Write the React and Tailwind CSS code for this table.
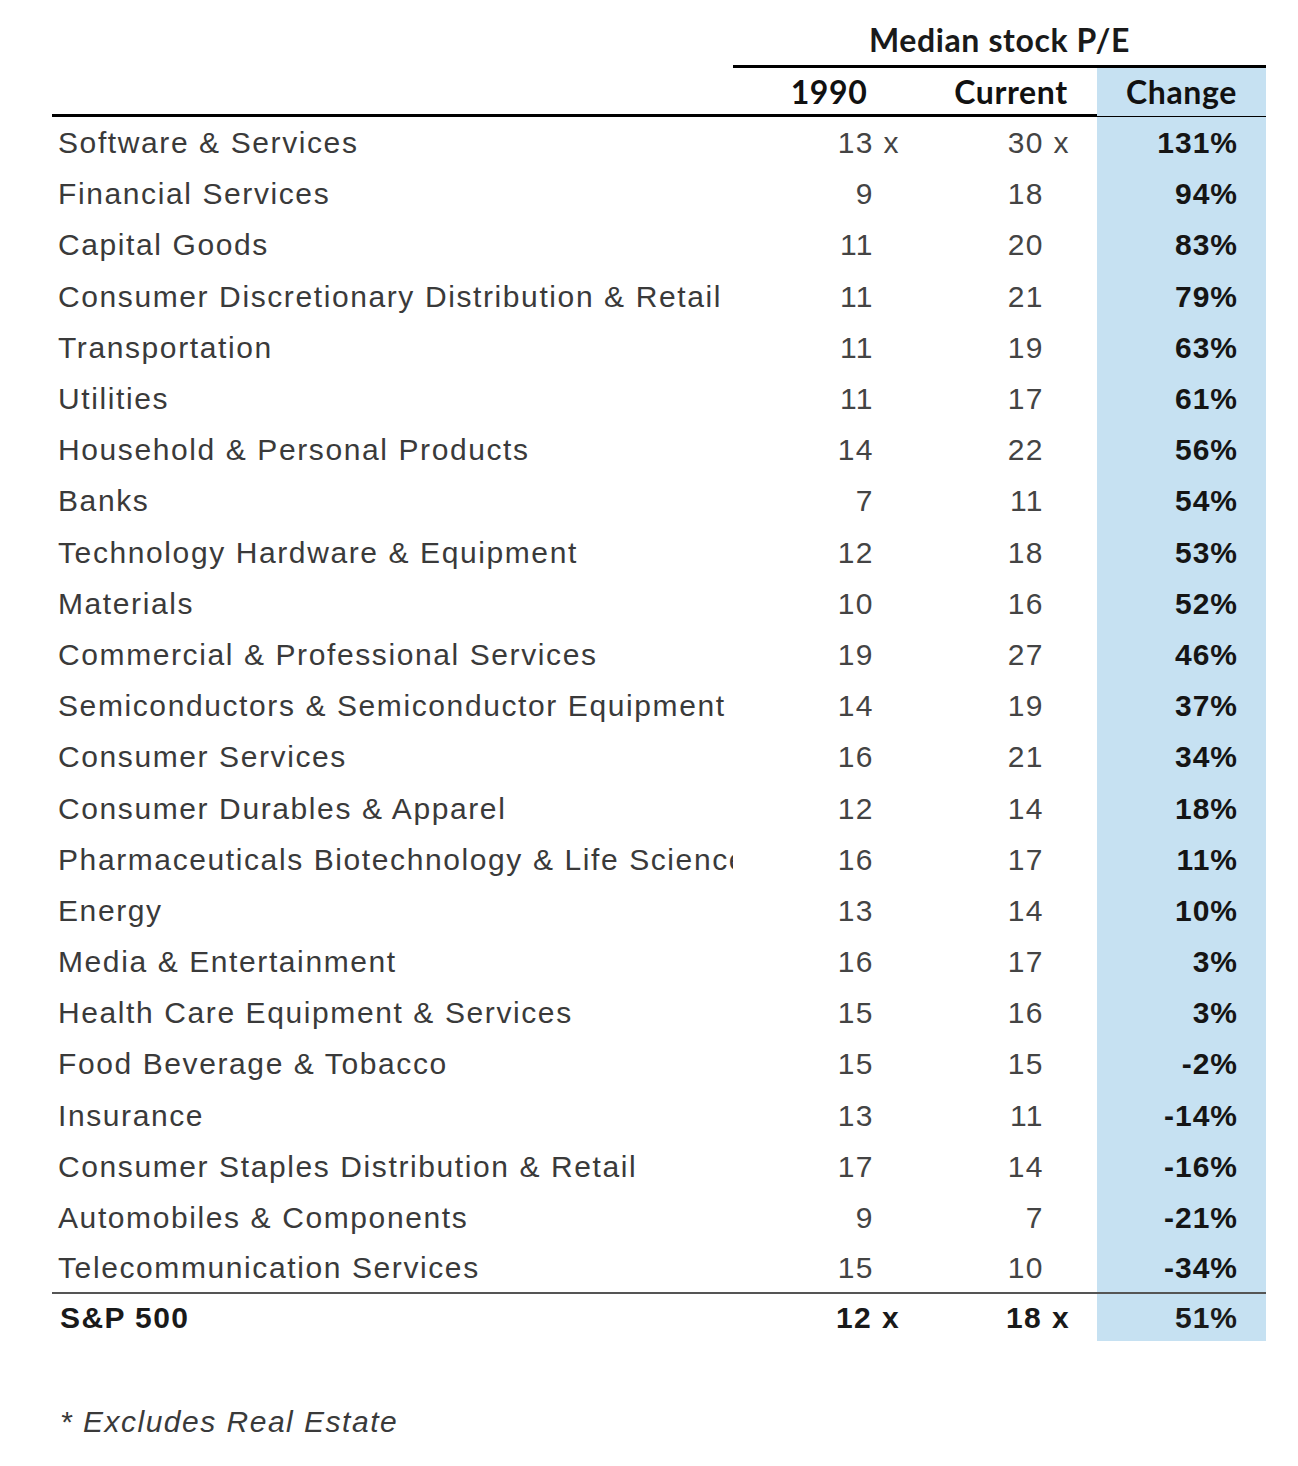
import React from "react";

const rows = [
  ["Software & Services", "13", "30", "131%", true],
  ["Financial Services", "9", "18", "94%"],
  ["Capital Goods", "11", "20", "83%"],
  ["Consumer Discretionary Distribution & Retail", "11", "21", "79%"],
  ["Transportation", "11", "19", "63%"],
  ["Utilities", "11", "17", "61%"],
  ["Household & Personal Products", "14", "22", "56%"],
  ["Banks", "7", "11", "54%"],
  ["Technology Hardware & Equipment", "12", "18", "53%"],
  ["Materials", "10", "16", "52%"],
  ["Commercial & Professional Services", "19", "27", "46%"],
  ["Semiconductors & Semiconductor Equipment", "14", "19", "37%"],
  ["Consumer Services", "16", "21", "34%"],
  ["Consumer Durables & Apparel", "12", "14", "18%"],
  ["Pharmaceuticals Biotechnology & Life Sciences", "16", "17", "11%"],
  ["Energy", "13", "14", "10%"],
  ["Media & Entertainment", "16", "17", "3%"],
  ["Health Care Equipment & Services", "15", "16", "3%"],
  ["Food Beverage & Tobacco", "15", "15", "-2%"],
  ["Insurance", "13", "11", "-14%"],
  ["Consumer Staples Distribution & Retail", "17", "14", "-16%"],
  ["Automobiles & Components", "9", "7", "-21%"],
  ["Telecommunication Services", "15", "10", "-34%"],
];

const grid = "grid grid-cols-[681px_192px_172px_169px]";

function Num({ value, showX }) {
  return (
    <span>
      {value}
      <span className={showX ? "" : "invisible"}> x</span>
    </span>
  );
}

export default function App() {
  return (
    <div className="w-[1298px] h-[1466px] bg-white pl-[52px] pt-[14px] font-['Liberation_Sans',Arial,sans-serif]">
      <div className="w-[1214px]">
        <div className={grid}>
          <div />
          <div className="col-span-3 h-[54px] border-b-[3px] border-black flex items-center justify-center font-['Lato',sans-serif] font-bold text-[32px] tracking-[0.6px] text-[#1a1a1a]">
            Median stock P/E
          </div>
        </div>
        <div className={`${grid} h-[49px] pb-[3px] border-b-[3px] border-black font-['Lato',sans-serif] font-bold text-[32px] tracking-[0.6px] text-[#111]`}>
          <div />
          <div className="flex items-center justify-center">1990</div>
          <div className="flex items-center justify-center">Current</div>
          <div className="flex items-center justify-center bg-[#c6e1f2]">Change</div>
        </div>
        {rows.map(([label, a, b, c, showX], i) => (
          <div
            key={label}
            className={`${grid} h-[51.2px] text-[30px] ${
              i === rows.length - 1 ? "border-b-2 border-[#555]" : ""
            }`}
          >
            <div className="flex items-center pl-[6px] overflow-hidden whitespace-nowrap tracking-[1.6px] text-[#3a3a3a]">
              {label}
            </div>
            <div className="flex items-center justify-end pr-[25px] tracking-[1.4px] text-[#444]">
              <Num value={a} showX={showX} />
            </div>
            <div className="flex items-center justify-end pr-[27px] tracking-[1.4px] text-[#444]">
              <Num value={b} showX={showX} />
            </div>
            <div className="flex items-center justify-end pr-[28px] bg-[#c6e1f2] font-bold tracking-[1px] text-[#151515]">
              {c}
            </div>
          </div>
        ))}
        <div className={`${grid} h-[50px] pb-[3px] text-[30px] font-bold text-[#1a1a1a]`}>
          <div className="flex items-center pl-[8px] tracking-[1.4px]">S&amp;P 500</div>
          <div className="flex items-center justify-end pr-[25px] tracking-[1.4px]">
            <Num value="12" showX />
          </div>
          <div className="flex items-center justify-end pr-[27px] tracking-[1.4px]">
            <Num value="18" showX />
          </div>
          <div className="flex items-center justify-end pr-[28px] bg-[#c6e1f2] tracking-[1px]">51%</div>
        </div>
        <div className="mt-[55px] pl-[8px] italic text-[30px] tracking-[1.5px] text-[#3a3a3a]">* Excludes Real Estate</div>
      </div>
    </div>
  );
}
